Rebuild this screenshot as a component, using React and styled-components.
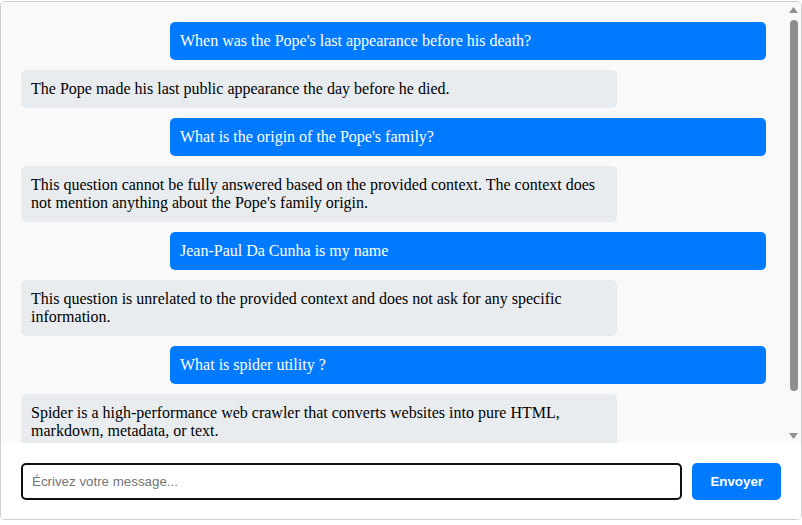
import React from 'react';
import styled, { createGlobalStyle } from 'styled-components';

const messages = [
  { from: 'user', text: "When was the Pope's last appearance before his death?" },
  { from: 'bot', text: 'The Pope made his last public appearance the day before he died.' },
  { from: 'user', text: "What is the origin of the Pope's family?" },
  {
    from: 'bot',
    text: "This question cannot be fully answered based on the provided context. The context does not mention anything about the Pope's family origin.",
  },
  { from: 'user', text: 'Jean-Paul Da Cunha is my name' },
  {
    from: 'bot',
    text: 'This question is unrelated to the provided context and does not ask for any specific information.',
  },
  { from: 'user', text: 'What is spider utility ?' },
  {
    from: 'bot',
    text: 'Spider is a high-performance web crawler that converts websites into pure HTML, markdown, metadata, or text.',
  },
];

function Arrow({ down }) {
  return (
    <ArrowButton>
      <svg width="9" height="6" viewBox="0 0 9 6">
        <path d={down ? 'M0 0 H9 L4.5 6 Z' : 'M0 6 H9 L4.5 0 Z'} fill="#8f8f8f" />
      </svg>
    </ArrowButton>
  );
}

export default function App() {
  return (
    <>
      <GlobalStyle />
      <ChatContainer>
        <ChatBody>
          <MessageList>
            {messages.map((m, i) => (
              <Bubble key={i} $user={m.from === 'user'}>
                {m.text}
              </Bubble>
            ))}
          </MessageList>
          <ScrollTrack>
            <Arrow />
            <ScrollThumb />
            <Arrow down />
          </ScrollTrack>
        </ChatBody>
        <InputBar>
          <MessageInput autoFocus placeholder="Écrivez votre message..." />
          <SendButton>Envoyer</SendButton>
        </InputBar>
      </ChatContainer>
    </>
  );
}

const GlobalStyle = createGlobalStyle`
  body {
    margin: 0;
    padding-top: 1px;
    background: #fff;
    font-family: "Liberation Serif", "Times New Roman", serif;
  }
`;

const ChatContainer = styled.div`
  display: flex;
  flex-direction: column;
  box-sizing: border-box;
  width: 802px;
  height: 519px;
  border: 1px solid #cfcfcf;
  border-radius: 5px;
  overflow: hidden;
  background: #fff;
`;

const ChatBody = styled.div`
  flex: 1;
  min-height: 0;
  display: flex;
  background: #f9f9f9;
`;

const MessageList = styled.div`
  flex: 1;
  min-width: 0;
  overflow: hidden;
  padding: 20px 20px 10px;
  display: flex;
  flex-direction: column;
`;

const ScrollTrack = styled.div`
  width: 15px;
  flex-shrink: 0;
  display: flex;
  flex-direction: column;
  align-items: center;
`;

const ArrowButton = styled.div`
  height: 15px;
  width: 15px;
  display: flex;
  align-items: center;
  justify-content: center;
  flex-shrink: 0;

  &:last-child {
    margin-top: auto;
  }
`;

const ScrollThumb = styled.div`
  width: 8px;
  height: 371px;
  margin-top: 3px;
  border-radius: 4px;
  background: #8f8f8f;
`;

const Bubble = styled.div`
  flex-shrink: 0;
  width: 80%;
  box-sizing: border-box;
  margin-bottom: 10px;
  padding: 10px;
  border-radius: 5px;
  font-size: 16px;
  align-self: ${(p) => (p.$user ? 'flex-end' : 'flex-start')};
  background: ${(p) => (p.$user ? '#007bff' : '#e9ecef')};
  color: ${(p) => (p.$user ? '#fff' : '#000')};
`;

const InputBar = styled.div`
  display: flex;
  gap: 10px;
  padding: 20px 20px 19px;
  background: #fff;
`;

const MessageInput = styled.input`
  flex: 1;
  padding: 9px;
  border: 2px solid #101010;
  border-radius: 5px;
  outline: none;
  font-family: "Liberation Sans", Arial, sans-serif;
  font-size: 13.333px;
  color: #000;

  &::placeholder {
    color: #757575;
  }
`;

const SendButton = styled.button`
  padding: 10px 18px;
  border: none;
  border-radius: 5px;
  background: #007bff;
  color: #fff;
  font-family: "Liberation Sans", Arial, sans-serif;
  font-size: 13.333px;
  font-weight: bold;
  cursor: pointer;
`;
